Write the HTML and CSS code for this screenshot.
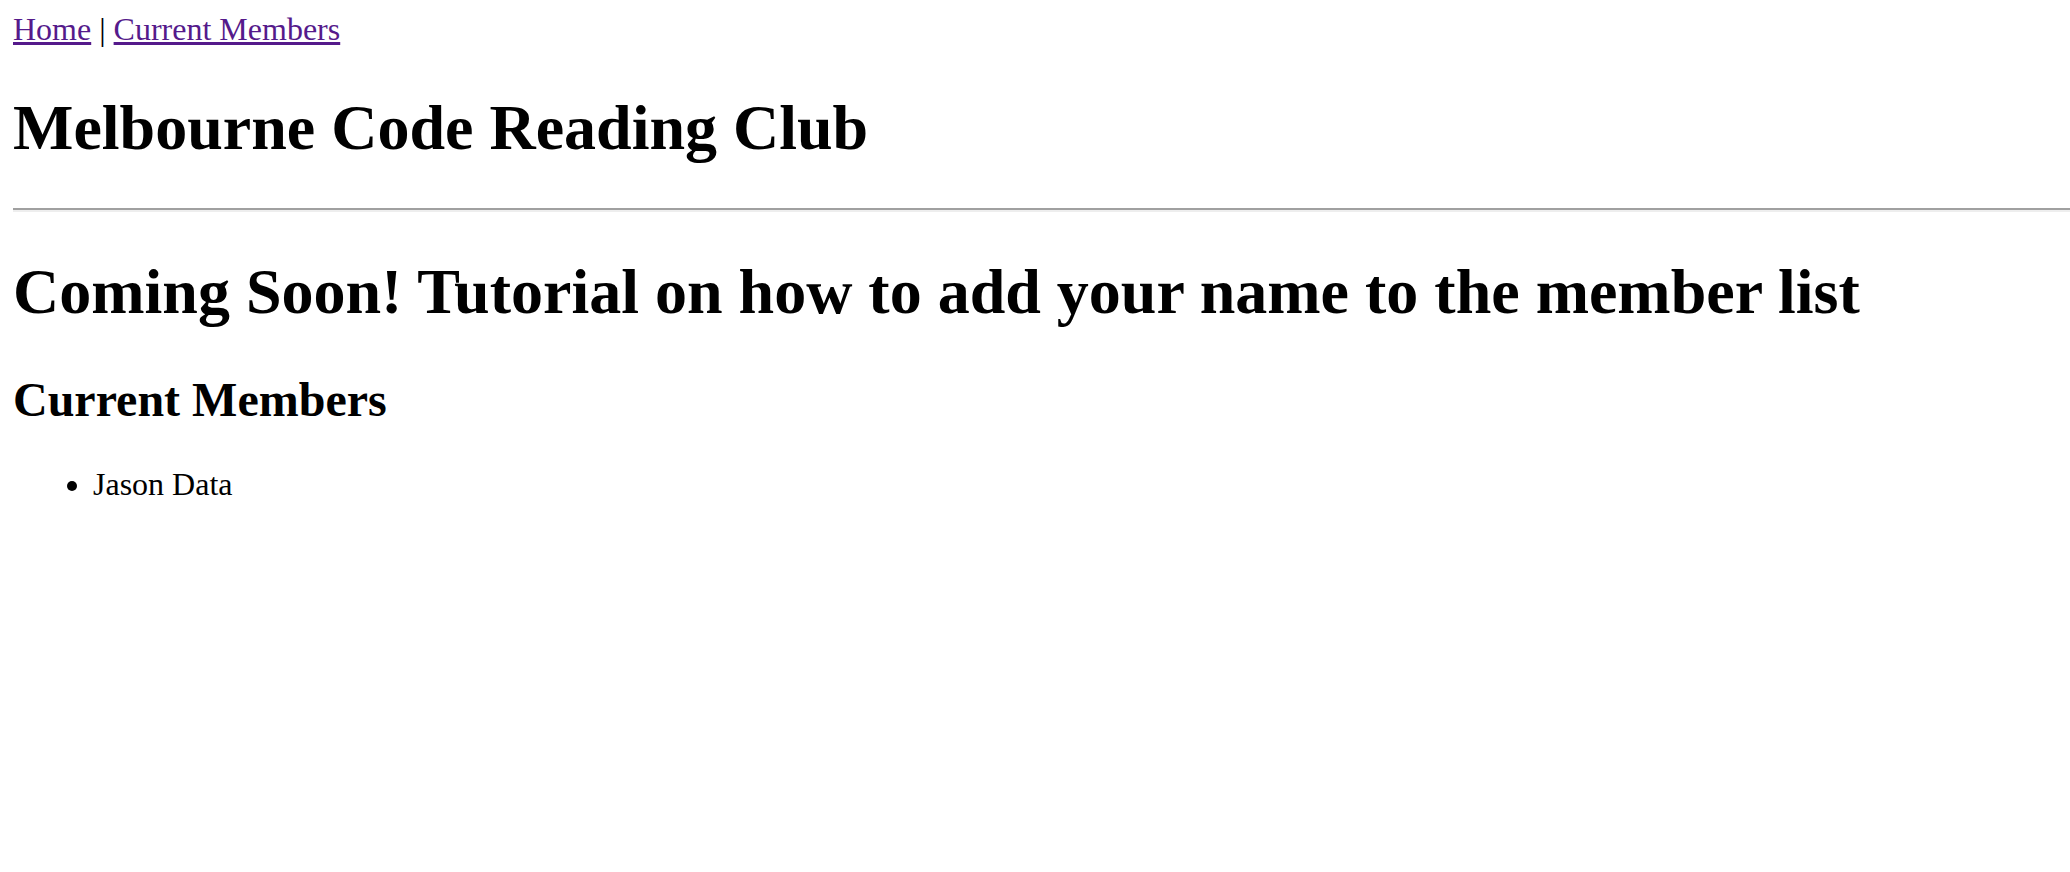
FILE: index.html
```html
<!DOCTYPE html>
<html>
<head>
<meta charset="utf-8">
<title>Melbourne Code Reading Club</title>
<link rel="stylesheet" href="styles.css">
</head>
<body class="page">
<nav class="nav"><a class="nav-link" href="#">Home</a> | <a class="nav-link" href="#">Current Members</a></nav>
<h1 class="title">Melbourne Code Reading Club</h1>
<hr class="rule">
<h1 class="title">Coming Soon! Tutorial on how to add your name to the member list</h1>
<h2 class="subtitle">Current Members</h2>
<ul class="members">
<li class="member">Jason Data</li>
</ul>
</body>
</html>
```
FILE: styles.css
```css
html {
  background: #ffffff;
}
.page {
  margin: 11px 0 13px 13px;
  font-family: "Liberation Serif", "Times New Roman", serif;
  font-size: 32px;
  color: #000000;
}
.nav {
  line-height: normal;
}
.nav-link {
  color: #551a8b;
  text-decoration: underline;
}
.title {
  font-size: 64px;
  font-weight: bold;
  margin: 42.9px 0;
}
.rule {
  margin: 16px 0;
  height: 0;
  border: none;
  border-top: 2px solid #a0a0a0;
  border-bottom: 2px solid #eeeeee;
}
.subtitle {
  font-size: 48px;
  font-weight: bold;
  margin: 39.8px 0;
}
.members {
  margin: 32px 0;
  padding-left: 80px;
  list-style: disc;
}
```
